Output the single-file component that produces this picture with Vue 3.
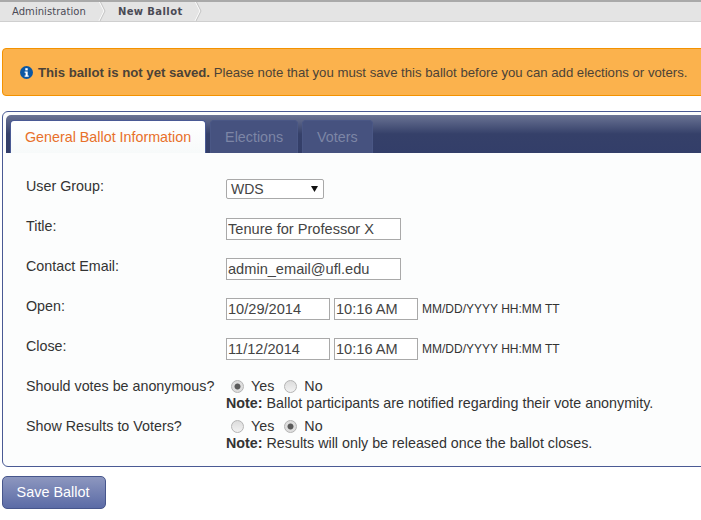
<script setup>
import { ref } from 'vue'

const group = ref('WDS')
const title = ref('Tenure for Professor X')
const email = ref('admin_email@ufl.edu')
const anonymous = ref('yes')
const showResults = ref('no')
const dateRows = ref([
  { label: 'Open:', date: '10/29/2014', time: '10:16 AM' },
  { label: 'Close:', date: '11/12/2014', time: '10:16 AM' }
])
</script>

<template>
  <div class="page">
    <div class="crumbs">
      <span class="crumb first">Administration</span>
      <svg class="chev" width="8" height="22" viewBox="0 0 8 22">
        <path d="M0.5 0 L6 11 L0.5 22" fill="none" stroke="#ffffff" stroke-width="1" />
        <path d="M1.5 0 L7 11 L1.5 22" fill="none" stroke="#c4c4c4" stroke-width="1" />
      </svg>
      <span class="crumb current">New Ballot</span>
      <svg class="chev" width="8" height="22" viewBox="0 0 8 22">
        <path d="M0.5 0 L6 11 L0.5 22" fill="none" stroke="#ffffff" stroke-width="1" />
        <path d="M1.5 0 L7 11 L1.5 22" fill="none" stroke="#c4c4c4" stroke-width="1" />
      </svg>
    </div>

    <div class="alert">
      <svg class="info" width="13" height="13" viewBox="0 0 13 13">
        <circle cx="6.5" cy="6.5" r="6.5" fill="#0a57a4" />
        <rect x="5.3" y="2.2" width="2.4" height="2.2" fill="#fff" />
        <path d="M4.6 5.4h3.1v4h1v1.3H4.6V9.4h1V6.7h-1z" fill="#fff" />
      </svg>
      <span><b>This ballot is not yet saved.</b> Please note that you must save this ballot before you can add elections or voters.</span>
    </div>

    <div class="panel">
      <div class="tabbar">
        <div class="tab active">General Ballot Information</div>
        <div class="tab">Elections</div>
        <div class="tab">Voters</div>
      </div>

      <div class="form">
        <div class="row">
          <label>User Group:</label>
          <div class="field">
            <div class="select">
              <span>{{ group }}</span>
              <svg width="7" height="6" viewBox="0 0 7 6"><path d="M0 0h7L3.5 6z" fill="#111" /></svg>
            </div>
          </div>
        </div>
        <div class="row">
          <label>Title:</label>
          <div class="field"><input v-model="title" class="text wide" type="text"></div>
        </div>
        <div class="row">
          <label>Contact Email:</label>
          <div class="field"><input v-model="email" class="text wide" type="text"></div>
        </div>
        <div v-for="d in dateRows" :key="d.label" class="row">
          <label>{{ d.label }}</label>
          <div class="field">
            <input v-model="d.date" class="text date" type="text">
            <input v-model="d.time" class="text time" type="text">
            <span class="hint">MM/DD/YYYY HH:MM TT</span>
          </div>
        </div>

        <div class="row">
          <label>Should votes be anonymous?</label>
          <div class="field-stack">
            <div class="radios">
              <input v-model="anonymous" type="radio" value="yes" name="anon"><span>Yes</span>
              <input v-model="anonymous" type="radio" value="no" name="anon"><span>No</span>
            </div>
            <div class="note"><b>Note:</b> Ballot participants are notified regarding their vote anonymity.</div>
          </div>
        </div>
        <div class="row">
          <label>Show Results to Voters?</label>
          <div class="field-stack">
            <div class="radios">
              <input v-model="showResults" type="radio" value="yes" name="results"><span>Yes</span>
              <input v-model="showResults" type="radio" value="no" name="results"><span>No</span>
            </div>
            <div class="note"><b>Note:</b> Results will only be released once the ballot closes.</div>
          </div>
        </div>
      </div>
    </div>

    <button class="save">Save Ballot</button>
  </div>
</template>

<style>
html, body {
  overflow: hidden;
  background: #fff;
}
</style>

<style scoped>
.page {
  width: 701px;
  height: 520px;
  overflow: hidden;
  font-family: "Liberation Sans", Arial, sans-serif;
  font-size: 14.3px;
  color: #333;
}

.crumbs {
  height: 22px;
  box-sizing: border-box;
  display: flex;
  align-items: center;
  background: #e4e4e4;
  border-top: 2px solid #a9a9a9;
  border-bottom: 1px solid #cfcfcf;
  overflow: hidden;
  font-family: "DejaVu Sans", Verdana, sans-serif;
  font-size: 10px;
  color: #4a4a55;
}

.crumb {
  margin-top: -1px;
  padding-left: 12px;
  padding-right: 11px;
}

.crumb.first {
  padding-right: 12px;
  letter-spacing: 0.05px;
}

.current {
  font-weight: bold;
  letter-spacing: 0.4px;
}

.chev {
  flex: none;
  margin-top: -1px;
}

.alert {
  display: flex;
  align-items: center;
  gap: 5px;
  margin: 26px -40px 0 2px;
  height: 48px;
  box-sizing: border-box;
  padding-left: 17px;
  background: #fbb24d;
  border: 1px solid #f39200;
  border-radius: 4px;
  font-size: 13.18px;
  color: #4b4237;
  white-space: nowrap;
}

.info {
  flex: none;
}

.panel {
  margin: 15px -40px 0 2px;
  height: 356px;
  box-sizing: border-box;
  padding: 3px;
  background: #fcfdfd;
  border: 1px solid #4a5a94;
  border-radius: 6px;
}

.tabbar {
  display: flex;
  gap: 4px;
  height: 38px;
  box-sizing: border-box;
  padding: 5px 0 0 4px;
  background: linear-gradient(#6a7394, #354069 50%, #333e69);
  border-radius: 5px 5px 0 0;
}

.tab {
  height: 33px;
  box-sizing: border-box;
  padding: 8px 14px 0;
  background: #46527f;
  border: 1px solid #4a5785;
  border-bottom: none;
  border-radius: 4px 4px 0 0;
  color: #7d86a6;
}

.tab.active {
  background: linear-gradient(#fff, #f7fafa);
  border-color: #4a5a94;
  color: #e8702a;
}

.form {
  padding: 25px 0 0 20px;
}

.row {
  display: flex;
  height: 40px;
}

.row label {
  width: 200px;
  flex: none;
}

.field {
  display: flex;
  align-items: flex-start;
  gap: 4px;
}

.select {
  width: 98px;
  height: 20px;
  box-sizing: border-box;
  margin-top: 1px;
  display: flex;
  align-items: center;
  justify-content: space-between;
  padding: 0 5px 1px 4px;
  background: #fff;
  border: 1px solid #a9a9a9;
  border-radius: 2px;
  font-size: 14px;
  color: #444;
}

.text {
  height: 22px;
  box-sizing: border-box;
  padding: 0 1px;
  margin: 0;
  background: #fff;
  border: 1px solid #a9a9a9;
  border-radius: 0;
  font-family: "Liberation Sans", Arial, sans-serif;
  font-size: 14.6px;
  color: #444;
  outline: none;
}

.wide {
  width: 175px;
}

.date {
  width: 104px;
}

.time {
  width: 84px;
}

.hint {
  font-size: 12px;
  line-height: 22px;
}

.field-stack {
  display: flex;
  flex-direction: column;
}

.radios {
  display: flex;
  align-items: center;
  height: 16px;
}

.radios span {
  margin-right: 5px;
}

.radios input {
  appearance: none;
  width: 13px;
  height: 13px;
  margin: 0 7px 0 5px;
  border: 1px solid #b4b4b4;
  border-radius: 50%;
  background: linear-gradient(#dcdcdc, #f2f2f2);
}

.radios input:checked {
  background: radial-gradient(circle, #5a5a5a 0 2.6px, #dedede 3.4px);
}

.note {
  margin-top: 1px;
}

.save {
  display: block;
  margin: 9px 0 0 2px;
  width: 104px;
  height: 33px;
  background: linear-gradient(#8d97bf, #5b6ba6);
  border: 1px solid #47568c;
  border-radius: 5px;
  font-family: "Liberation Sans", Arial, sans-serif;
  font-size: 14.4px;
  font-weight: normal;
  color: #fff;
  padding: 0 2px 2px 0;
}
</style>
